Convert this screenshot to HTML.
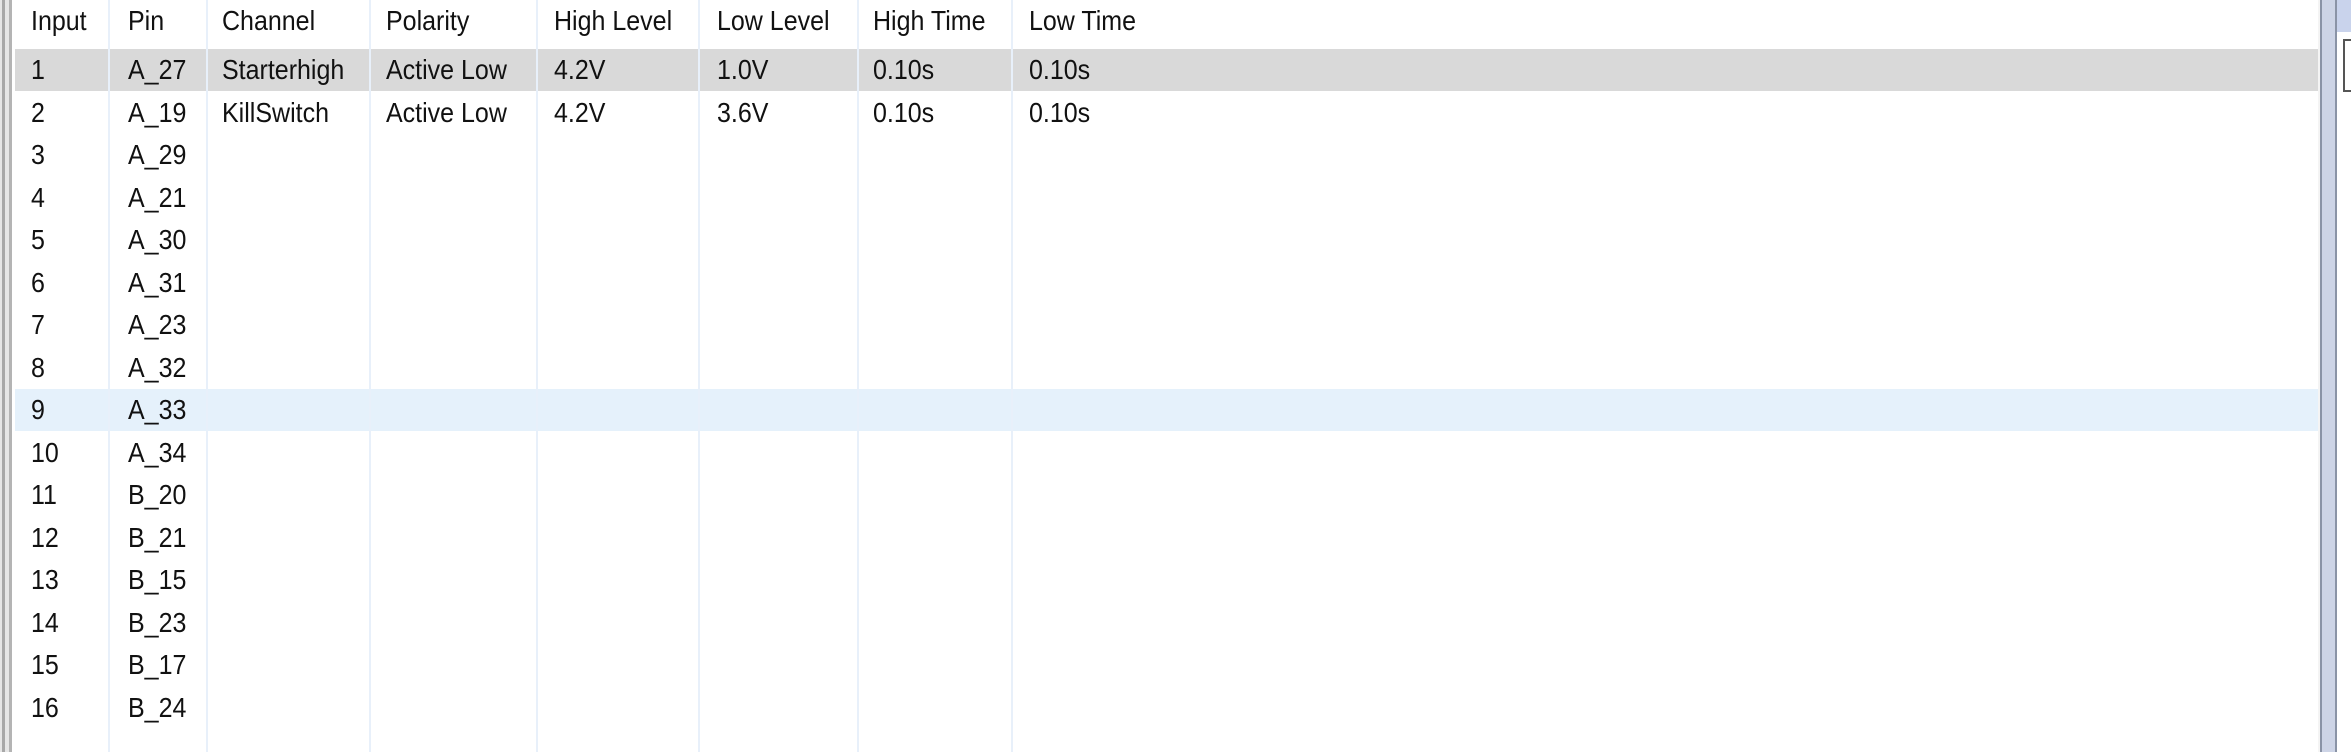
<!DOCTYPE html>
<html><head><style>
body{margin:0;width:2351px;height:752px;overflow:hidden;background:#fff;font-family:"Liberation Sans",sans-serif;font-size:25px;color:#111;position:relative}
.a{position:absolute}
.vl{position:absolute;top:0;height:752px;width:2px;background:#e8f0fa}
.t{position:absolute;white-space:nowrap;line-height:42px;transform:scaleY(1.12);transform-origin:left center}
</style></head><body>
<div class="a" style="left:0;top:0;width:12px;height:752px;background:#e6e6e6"></div>
<div class="a" style="left:2px;top:0;width:3px;height:752px;background:#a8a8a8"></div>
<div class="a" style="left:9px;top:0;width:3px;height:752px;background:#b4b4b4"></div>
<div class="a" style="left:15px;top:49px;width:2303px;height:42px;background:#d9d9d9"></div>
<div class="a" style="left:15px;top:389px;width:2303px;height:42px;background:#e5f1fb"></div>
<div class="vl" style="left:108px"></div><div class="vl" style="left:206px"></div><div class="vl" style="left:369px"></div><div class="vl" style="left:536px"></div><div class="vl" style="left:698px"></div><div class="vl" style="left:857px"></div><div class="vl" style="left:1011px"></div>
<div class="a" style="left:2318px;top:0;width:2px;height:752px;background:#f4f4f4"></div>
<div class="a" style="left:2320px;top:0;width:17px;height:752px;background:#cdd4e6;border-left:2px solid #8a93a6;border-right:2px solid #8a93a6;box-sizing:border-box"></div>
<div class="a" style="left:2337px;top:0;width:14px;height:32px;background:#c9d3ec"></div>
<div class="a" style="left:2343px;top:39px;width:8px;height:49px;border:2px solid #555;border-right:none;background:#fff"></div>
<div id="g"></div>
<script>
var cols=[31,128,222,386,554,717,873,1029];
var h=["Input","Pin","Channel","Polarity","High Level","Low Level","High Time","Low Time"];
var pins=["A_27","A_19","A_29","A_21","A_30","A_31","A_23","A_32","A_33","A_34","B_20","B_21","B_15","B_23","B_17","B_24"];
var s="";
function put(x,y,t){s+='<div class="t" style="left:'+x+'px;top:'+y+'px">'+t+'</div>';}
h.forEach(function(t,i){put(cols[i],0,t)});
for(var r=0;r<16;r++){var y=49+r*42.5;put(cols[0],y,r+1);put(cols[1],y,pins[r]);}
var d=[["Starterhigh","Active Low","4.2V","1.0V","0.10s","0.10s"],["KillSwitch","Active Low","4.2V","3.6V","0.10s","0.10s"]];
d.forEach(function(row,r){row.forEach(function(t,i){put(cols[i+2],49+r*42.5,t)})});
document.getElementById("g").innerHTML=s;
</script>
</body></html>
